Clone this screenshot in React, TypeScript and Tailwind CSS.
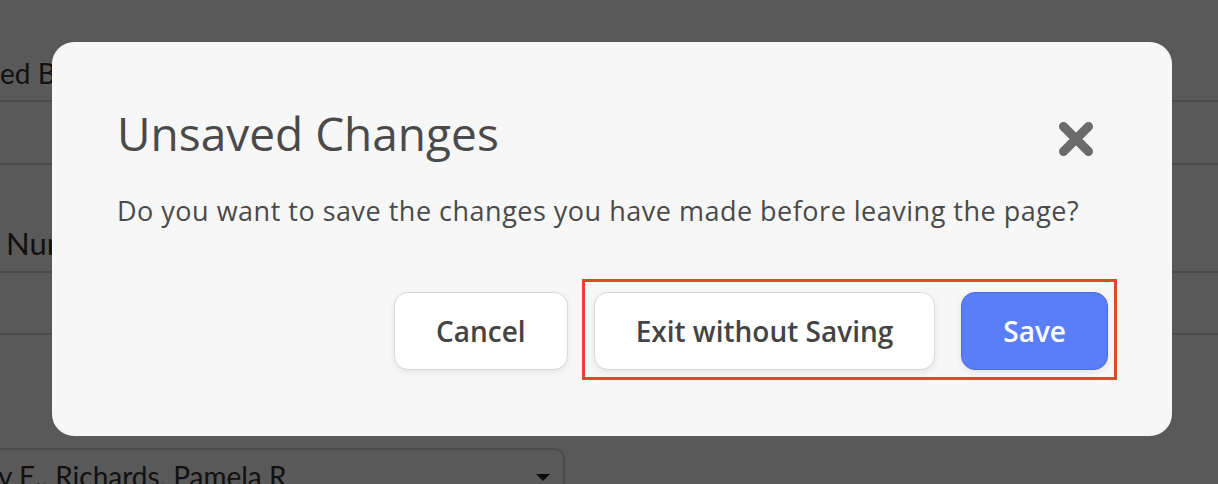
import React from 'react';

function CloseIcon() {
  return (
    <svg width="34" height="34" viewBox="0 0 34 34" aria-hidden="true">
      <path
        d="M4.5 4.5 L29.5 29.5 M29.5 4.5 L4.5 29.5"
        stroke="#6b6b6b"
        strokeWidth="9"
        strokeLinecap="round"
        fill="none"
      />
    </svg>
  );
}

function PageBehind() {
  return (
    <div className="h-[484px] w-[1218px] overflow-hidden bg-white font-['Lato',sans-serif] text-[#333]">
      <div className="box-border h-[102px] border-b-2 border-[#d6d6d6] pt-[57px] text-[28px] leading-[1.2]">
        ed By
      </div>
      <div className="box-border h-[63px] border-b-2 border-[#d6d6d6]" />
      <div className="box-border h-[108px] border-b-2 border-[#d6d6d6] pl-[6px] pt-[60px] text-[31px] leading-[1.2]">
        Number
      </div>
      <div className="box-border h-[62px] border-b-2 border-[#d6d6d6]" />
      <div className="h-[113px]" />
      <div className="-ml-[20px] box-border flex h-[60px] w-[585px] items-start justify-between rounded-[10px] border-2 border-[#d6d6d6] pl-[16px] pr-[13px] pt-[10px]">
        <span className="whitespace-nowrap text-[28px] leading-[1.2]">y E., Richards, Pamela R</span>
        <span className="mt-[14px] h-0 w-0 border-x-[7.5px] border-t-[7px] border-x-transparent border-t-[#222]" />
      </div>
    </div>
  );
}

export default function App() {
  return (
    <div className="relative h-[484px] w-[1218px] overflow-hidden">
      <PageBehind />

      <div className="absolute inset-0 bg-black/65 pl-[52px] pt-[42px]">
        <div className="box-border flex h-[394px] w-[1120px] flex-col rounded-[22px] bg-[#f7f7f7] pl-[65px] pr-[64px] pt-[63px] font-['Open_Sans',sans-serif] text-[#4a4a4a]">
          <div className="flex items-start justify-between">
            <h2 className="text-[46px] font-normal leading-[56px]">Unsaved Changes</h2>
            <button className="mr-[15px] mt-[17px]" aria-label="Close">
              <CloseIcon />
            </button>
          </div>

          <p className="mt-[33px] text-[27px] leading-[34px] tracking-[0.5px]">
            Do you want to save the changes you have made before leaving the page?
          </p>

          <div className="mt-[64px] flex justify-end gap-[26px]">
            <button className="box-border h-[78px] rounded-[14px] border border-[#d9d9d9] bg-white px-[41px] text-[28px] font-semibold text-[#444] shadow-[0_2px_6px_rgba(0,0,0,0.08)]">
              Cancel
            </button>
            <div className="relative flex gap-[26px]">
              <button className="box-border h-[78px] rounded-[14px] border border-[#d9d9d9] bg-white px-[41px] text-[28px] font-semibold text-[#444] shadow-[0_2px_6px_rgba(0,0,0,0.08)]">
                Exit without Saving
              </button>
              <button className="box-border h-[78px] rounded-[14px] border border-[#4d6bd8] bg-[#5a7ef7] px-[41px] text-[28px] font-semibold text-white shadow-[0_2px_6px_rgba(0,0,0,0.08)]">
                Save
              </button>
              <span className="pointer-events-none absolute -bottom-[10px] -left-[12px] -right-[9px] -top-[13px] border-[3px] border-[#e8432c]" />
            </div>
          </div>
        </div>
      </div>
    </div>
  );
}
